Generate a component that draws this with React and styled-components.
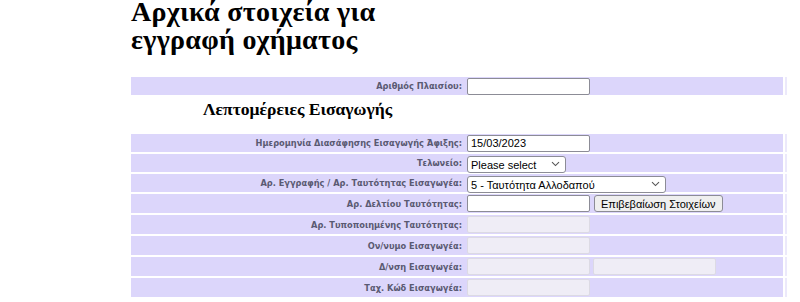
import React from 'react';
import styled, { createGlobalStyle } from 'styled-components';

const GlobalStyle = createGlobalStyle`
  body {
    margin: 0;
    background: #fff;
  }
`;

const rows = [
  { label: 'Ημερομηνία Διασάφησης Εισαγωγής Άφιξης:', kind: 'text', value: '15/03/2023' },
  { label: 'Τελωνείο:', kind: 'select', value: 'Please select', width: 99 },
  { label: 'Αρ. Εγγραφής / Αρ. Ταυτότητας Εισαγωγέα:', kind: 'select', value: '5 - Ταυτότητα Αλλοδαπού', width: 199 },
  { label: 'Αρ. Δελτίου Ταυτότητας:', kind: 'check', tall: true },
  { label: 'Αρ. Τυποποιημένης Ταυτότητας:', kind: 'disabled', tall: true },
  { label: 'Ον/νυμο Εισαγωγέα:', kind: 'disabled', tall: true },
  { label: 'Δ/νση Εισαγωγέα:', kind: 'double', tall: true },
  { label: 'Ταχ. Κώδ Εισαγωγέα:', kind: 'disabled', tall: true },
];

function Chevron() {
  return (
    <ChevronIcon width="9" height="6" viewBox="0 0 9 6">
      <path d="M1 1.2 L4.5 4.6 L8 1.2" fill="none" stroke="#555" strokeWidth="1.1" />
    </ChevronIcon>
  );
}

function FieldFor({ row }) {
  if (row.kind === 'text') return <TextInput defaultValue={row.value} />;
  if (row.kind === 'select') {
    return (
      <SelectWrap $w={row.width}>
        <Select defaultValue={row.value}>
          <option>{row.value}</option>
        </Select>
        <Chevron />
      </SelectWrap>
    );
  }
  if (row.kind === 'check') {
    return (
      <>
        <TextInput />
        <PlainButton type="button">Επιβεβαίωση Στοιχείων</PlainButton>
      </>
    );
  }
  if (row.kind === 'double') {
    return (
      <>
        <TextInput disabled />
        <TextInput disabled />
      </>
    );
  }
  return <TextInput disabled />;
}

export default function App() {
  return (
    <>
      <GlobalStyle />
      <Page>
        <Title>Αρχικά στοιχεία για εγγραφή οχήματος</Title>

        <FormTable>
          <Row>
            <Label>Αριθμός Πλαισίου:</Label>
            <Field>
              <TextInput />
            </Field>
            <Edge />
          </Row>
        </FormTable>

        <SectionRow>
          <SectionTitle>Λεπτομέρειες Εισαγωγής</SectionTitle>
        </SectionRow>

        <FormTable>
          {rows.map((row) => (
            <Row key={row.label} $tall={row.tall}>
              <Label>{row.label}</Label>
              <Field>
                <FieldFor row={row} />
              </Field>
              <Edge />
            </Row>
          ))}
        </FormTable>
      </Page>
    </>
  );
}

const Page = styled.div`
  padding-left: 131px;
  width: 658px;
`;

const Title = styled.h1`
  margin: -2px 0 23px 0;
  width: 270px;
  font-family: 'Liberation Serif', 'Times New Roman', serif;
  font-size: 28px;
  line-height: 28px;
  letter-spacing: 0.3px;
  font-weight: bold;
  color: #000;
`;

const FormTable = styled.div`
  display: flex;
  flex-direction: column;
  gap: 2px;
`;

const Row = styled.div`
  display: grid;
  grid-template-columns: 333px 321px 2px;
  height: ${({ $tall }) => ($tall ? '19px' : '18px')};
`;

const Label = styled.div`
  display: flex;
  align-items: center;
  justify-content: flex-end;
  padding-right: 2px;
  background: #dcd6fb;
  font-family: 'DejaVu Sans', Verdana, sans-serif;
  font-size: 8.25px;
  font-weight: bold;
  color: #5a5a72;
  white-space: nowrap;
`;

const Field = styled.div`
  display: flex;
  align-items: center;
  gap: 3px;
  padding-left: 3px;
  background: #dcd6fb;
  margin-right: 2px;
`;

const Edge = styled.div`
  background: #ece9fb;
`;

const TextInput = styled.input`
  box-sizing: border-box;
  width: 123px;
  height: 17px;
  margin: 0;
  padding: 0 3px;
  border: 1px solid #8c8c96;
  border-radius: 2px;
  background: #fff;
  font-family: 'Liberation Sans', Arial, sans-serif;
  font-size: 11px;
  color: #000;
  &:disabled {
    background: #efedf6;
    border-color: #dcdae4;
  }
`;

const SelectWrap = styled.div`
  position: relative;
  width: ${({ $w }) => $w}px;
  height: 17px;
`;

const Select = styled.select`
  box-sizing: border-box;
  appearance: none;
  width: 100%;
  height: 100%;
  margin: 0;
  padding: 0 3px;
  border: 1px solid #8c8c96;
  border-radius: 3px;
  background: #fff;
  font-family: 'Liberation Sans', Arial, sans-serif;
  font-size: 11px;
  color: #000;
`;

const ChevronIcon = styled.svg`
  position: absolute;
  right: 6px;
  top: 6px;
  pointer-events: none;
`;

const PlainButton = styled.button`
  box-sizing: border-box;
  height: 17px;
  margin: 0 0 0 1px;
  padding: 0 6px;
  border: 1px solid #8c8c96;
  border-radius: 3px;
  background: #efefef;
  font-family: 'Liberation Sans', Arial, sans-serif;
  font-size: 11px;
  color: #000;
  white-space: nowrap;
`;

const SectionRow = styled.div`
  width: 333px;
  height: 39px;
  display: flex;
  align-items: flex-start;
  justify-content: center;
`;

const SectionTitle = styled.h3`
  margin: 3px 0 0 0;
  font-family: 'Liberation Serif', 'Times New Roman', serif;
  font-size: 17.6px;
  line-height: 22px;
  font-weight: bold;
  color: #000;
`;
